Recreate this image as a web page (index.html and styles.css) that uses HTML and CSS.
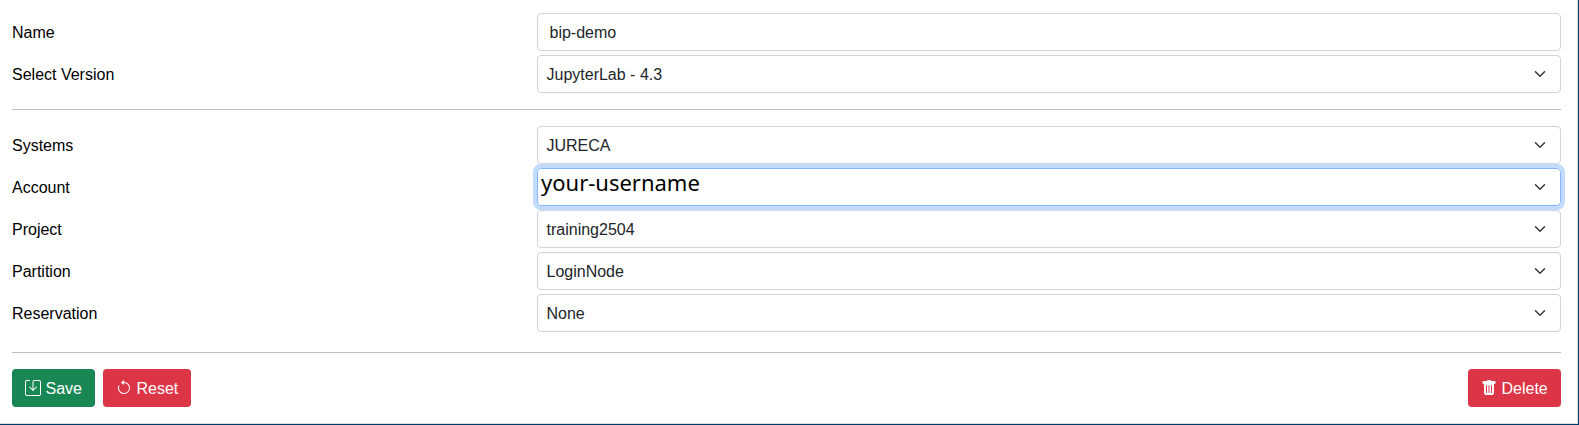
FILE: index.html
```
<!DOCTYPE html>
<html lang="en">
<head>
<meta charset="utf-8">
<title>Lab configuration</title>
<link rel="stylesheet" href="styles.css">
</head>
<body>
<form class="panel">
  <div class="fields">
    <div class="row"><span class="label">Name</span><div class="control input"><span class="value">bip-demo</span></div></div>
    <div class="row"><span class="label">Select Version</span><div class="control"><span class="value">JupyterLab - 4.3</span><svg class="chevron" viewBox="0 0 16 16"><path d="m2 5 6 6 6-6"/></svg></div></div>
  </div>
  <hr class="divider">
  <div class="fields">
    <div class="row"><span class="label">Systems</span><div class="control"><span class="value">JURECA</span><svg class="chevron" viewBox="0 0 16 16"><path d="m2 5 6 6 6-6"/></svg></div></div>
    <div class="row"><span class="label">Account</span><div class="control focused"><span class="username">your-username</span><svg class="chevron" viewBox="0 0 16 16"><path d="m2 5 6 6 6-6"/></svg></div></div>
    <div class="row"><span class="label">Project</span><div class="control"><span class="value">training2504</span><svg class="chevron" viewBox="0 0 16 16"><path d="m2 5 6 6 6-6"/></svg></div></div>
    <div class="row"><span class="label">Partition</span><div class="control"><span class="value">LoginNode</span><svg class="chevron" viewBox="0 0 16 16"><path d="m2 5 6 6 6-6"/></svg></div></div>
    <div class="row"><span class="label">Reservation</span><div class="control"><span class="value">None</span><svg class="chevron" viewBox="0 0 16 16"><path d="m2 5 6 6 6-6"/></svg></div></div>
  </div>
  <hr class="divider last">
  <div class="actions">
    <button type="button" class="btn save"><svg class="icon" viewBox="0 0 16 16"><path d="M2 1a1 1 0 0 0-1 1v12a1 1 0 0 0 1 1h12a1 1 0 0 0 1-1V2a1 1 0 0 0-1-1H9.500a1 1 0 0 0-1 1v7.293l2.646-2.647a.5.5 0 0 1 .708.708l-3.500 3.500a.5.5 0 0 1-.708 0l-3.500-3.500a.5.5 0 1 1 .708-.708L7.500 9.293V2a2 2 0 0 1 2-2H14a2 2 0 0 1 2 2v12a2 2 0 0 1-2 2H2a2 2 0 0 1-2-2V2a2 2 0 0 1 2-2h2.500a.5.5 0 0 1 0 1z"/></svg><span class="text">Save</span></button>
    <button type="button" class="btn danger reset"><svg class="icon" viewBox="0 0 16 16"><path fill-rule="evenodd" d="M8 3a5 5 0 1 1-4.546 2.914.5.5 0 0 0-.908-.417A6 6 0 1 0 8 2z"/><path d="M8 4.466V.534a.25.25 0 0 0-.410-.192L5.230 2.308a.25.25 0 0 0 0 .384l2.360 1.966A.25.25 0 0 0 8 4.466"/></svg><span class="text">Reset</span></button>
    <button type="button" class="btn danger delete"><svg class="icon" viewBox="0 0 16 16"><path d="M2.500 1a1 1 0 0 0-1 1v1a1 1 0 0 0 1 1H3v9a2 2 0 0 0 2 2h6a2 2 0 0 0 2-2V4h.5a1 1 0 0 0 1-1V2a1 1 0 0 0-1-1H10a1 1 0 0 0-1-1H7a1 1 0 0 0-1 1zm3 4a.5.5 0 0 1 .5.5v7a.5.5 0 0 1-1 0v-7a.5.5 0 0 1 .5-.5M8 5a.5.5 0 0 1 .5.5v7a.5.5 0 0 1-1 0v-7A.5.5 0 0 1 8 5m3 .5v7a.5.5 0 0 1-1 0v-7a.5.5 0 0 1 1 0"/></svg><span class="text">Delete</span></button>
  </div>
</form>
</body>
</html>
```
FILE: styles.css
```
* { box-sizing: border-box; }
body { margin: 0; background: #fff; font: 16px/24px "Liberation Sans", Arial, sans-serif; color: #000; }
.panel { height: 425px; padding: 13px 17px 0 12px; border-right: 1px solid #003a66; border-bottom: 1px solid #003a66; box-shadow: inset -1px -1px #dedede; }
.fields { display: grid; gap: 4px; }
.row { display: grid; grid-template-columns: 525px 1fr; align-items: center; height: 38px; }
.label, .value, .text { padding-top: 2px; }
.control { display: flex; align-items: center; justify-content: space-between; height: 38px; padding: 0 12px 0 8.500px; border: 1px solid #ced4da; border-radius: 4px; color: #212529; }
.input { padding-left: 11.500px; }
.focused { padding-left: 3px; border-color: #86b7fe; box-shadow: 0 0 0 4px #c2dbfe; z-index: 1; }
.username { font: 22px/30px "Noto Sans", sans-serif; color: #000; margin-top: -11px; }
.chevron { width: 16px; height: 12px; fill: none; stroke: #343a40; stroke-width: 2; stroke-linecap: round; stroke-linejoin: round; }
.divider { height: 1px; margin: 16px 0; border: 0; background: #bfbfbf; }
.last { margin-top: 20px; }
.actions { display: flex; gap: 8px; }
.btn { display: flex; align-items: center; gap: 4.500px; height: 38px; padding: 0 0 0 13px; border: 0; border-radius: 4px; color: #fff; font: inherit; }
.save { width: 83px; background: #198754; }
.danger { background: #dc3545; }
.reset { width: 88px; }
.delete { width: 93px; margin-left: auto; }
.icon { width: 16px; height: 16px; fill: currentColor; flex: none; }
```
